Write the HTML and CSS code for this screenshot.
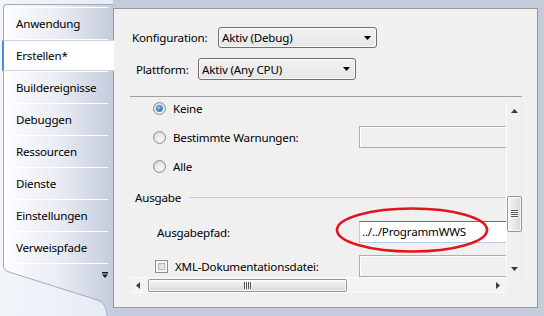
FILE: index.html
```html
<!DOCTYPE html>
<html lang="de">
<head>
<meta charset="utf-8">
<title>Projekteigenschaften</title>
<link rel="stylesheet" href="styles.css">
</head>
<body>
<div class="window">
  <nav class="side">
    <div class="tabs">
      <div class="tab"><span>Anwendung</span></div>
      <div class="tab active"><span>Erstellen*</span></div>
      <div class="tab"><span>Buildereignisse</span></div>
      <div class="tab"><span>Debuggen</span></div>
      <div class="tab"><span>Ressourcen</span></div>
      <div class="tab"><span>Dienste</span></div>
      <div class="tab"><span>Einstellungen</span></div>
      <div class="tab"><span>Verweispfade</span></div>
    </div>
    <svg class="tail" width="110" height="53" viewBox="0 0 110 53">
      <defs>
        <linearGradient id="tg" x1="0" y1="0" x2="1" y2="0">
          <stop offset="0" stop-color="#fdfdfe"/>
          <stop offset="0.5" stop-color="#e9ecf3"/>
          <stop offset="1" stop-color="#c4ccdc"/>
        </linearGradient>
      </defs>
      <path d="M0 0 L0 4 Q0 8 6 9.5 L96 38 Q103 40 105 53 L110 53 L110 0 Z" fill="url(#tg)"/>
      <path d="M0.5 0 L0.5 4 Q0.5 7.5 6 9 L96 37.5 Q102.5 39.5 104.5 53" fill="none" stroke="#a3abbb" stroke-width="1"/>
      <line x1="10" y1="0.5" x2="105" y2="0.5" stroke="#ffffff"/>
      <rect x="99" y="9" width="6" height="1.5" fill="#1a1a1a"/>
      <path d="M99 11.5 L105 11.5 L102 15 Z" fill="#1a1a1a"/>
    </svg>
  </nav>

  <main class="panel">
    <div class="cfg-row cfg-konf">
      <label class="cfg-label konf-label">Konfiguration:</label>
      <div class="select konf-select">
        <span>Aktiv (Debug)</span>
        <svg class="drop" width="7" height="4" viewBox="0 0 7 4"><path d="M0 0 L7 0 L3.5 4 Z" fill="#000"/></svg>
      </div>
    </div>
    <div class="cfg-row cfg-plat">
      <label class="cfg-label plat-label">Plattform:</label>
      <div class="select plat-select">
        <span>Aktiv (Any CPU)</span>
        <svg class="drop" width="7" height="4" viewBox="0 0 7 4"><path d="M0 0 L7 0 L3.5 4 Z" fill="#000"/></svg>
      </div>
    </div>
    <div class="sep"></div>

    <div class="scroll">
      <div class="content">
        <div class="row radio-row first">
          <span class="radio on"></span><span class="lbl">Keine</span>
        </div>
        <div class="row radio-row">
          <div class="lead"><span class="radio"></span><span class="lbl">Bestimmte Warnungen:</span></div>
          <div class="input disabled"></div>
        </div>
        <div class="row radio-row">
          <span class="radio"></span><span class="lbl">Alle</span>
        </div>
        <div class="row group">
          <span class="group-title">Ausgabe</span><span class="group-line"></span>
        </div>
        <div class="row">
          <div class="lead plain"><span>Ausgabepfad:</span></div>
          <div class="input active-input">../../ProgrammWWS</div>
        </div>
        <div class="row">
          <div class="lead check-lead"><span class="check"></span><span class="lbl">XML-Dokumentationsdatei:</span></div>
          <div class="input disabled"></div>
        </div>
      </div>

      <div class="vbar">
        <div class="sbtn"><svg width="7" height="4" viewBox="0 0 7 4"><path d="M3.5 0 L7 4 L0 4 Z" fill="#3c3c3c"/></svg></div>
        <div class="vthumb"><span class="vgrip"></span></div>
        <div class="sbtn down"><svg width="7" height="4" viewBox="0 0 7 4"><path d="M0 0 L7 0 L3.5 4 Z" fill="#3c3c3c"/></svg></div>
      </div>

      <div class="hbar">
        <div class="sbtn"><svg width="4" height="7" viewBox="0 0 4 7"><path d="M0 3.5 L4 0 L4 7 Z" fill="#3c3c3c"/></svg></div>
        <div class="hthumb"><span class="hgrip"></span></div>
        <div class="sbtn right"><svg width="4" height="7" viewBox="0 0 4 7"><path d="M4 3.5 L0 0 L0 7 Z" fill="#3c3c3c"/></svg></div>
      </div>
      <div class="corner"></div>
    </div>
  </main>

  <svg class="mark" width="544" height="316" viewBox="0 0 544 316">
    <ellipse cx="412" cy="230" rx="75" ry="21.5" fill="none" stroke="#e3141c" stroke-width="2.6"/>
  </svg>
</div>
</body>
</html>
```

FILE: styles.css
```css
* { box-sizing: border-box; }

html, body {
  margin: 0;
  padding: 0;
}

body {
  width: 544px;
  height: 316px;
  overflow: hidden;
  font-family: "Noto Sans", "Open Sans", sans-serif;
  font-size: 11.6px;
  letter-spacing: -0.2px;
  color: #000;
}

.window {
  position: relative;
  display: flex;
  width: 544px;
  height: 316px;
  background: #c4ccdc;
}

/* ---------- left tab strip ---------- */
.side {
  width: 113px;
  flex-shrink: 0;
  padding-top: 4px;
  padding-left: 3px;
  background: linear-gradient(to right, #f2f5fa, #e6ebf4);
  display: flex;
  flex-direction: column;
}

.tabs {
  border-left: 1px solid #a3abbb;
  border-top: 1px solid #a3abbb;
  border-top-left-radius: 4px;
  background: linear-gradient(to right, #fdfdfe 0%, #e9ecf3 50%, #c4ccdc 100%);
  padding-top: 2px;
}

.tab {
  position: relative;
  height: 32px;
  padding-left: 12px;
  padding-top: 1px;
  line-height: 31px;
  white-space: nowrap;
}

.tab::before {
  content: "";
  position: absolute;
  top: 0;
  left: 9px;
  right: 5px;
  height: 1px;
  background: #fff;
}

.tab span {
  position: relative;
  z-index: 1;
}

.tab.active::after {
  content: "";
  position: absolute;
  left: -2px;
  right: -1px;
  top: 1px;
  bottom: 0;
  background: #fff;
  border-left: 2px solid #3d8fe6;
  border-top: 1px solid #cdd2dc;
  border-bottom: 1px solid #cdd2dc;
  z-index: 0;
}

.tail {
  display: block;
}

/* ---------- right panel ---------- */
.panel {
  width: 425px;
  height: 300px;
  margin-top: 8px;
  border: 1px solid #9a9a9a;
  background: #f0f0f0;
  padding: 18px 15px 0 16px;
  display: flex;
  flex-direction: column;
}

.cfg-row {
  display: flex;
  align-items: center;
}

.cfg-konf { padding-left: 2px; }
.cfg-plat { padding-left: 6px; margin-top: 10px; }

.konf-label { width: 86px; }
.plat-label { width: 62px; }

.select {
  display: flex;
  align-items: center;
  justify-content: space-between;
  height: 21px;
  border: 1px solid #707070;
  border-radius: 3px;
  background: linear-gradient(#f1f1f1, #e6e6e6);
  box-shadow: inset 0 0 0 1px rgba(255, 255, 255, 0.7);
  padding: 0 5px 0 3px;
}

.konf-select { width: 159px; }
.plat-select { width: 158px; height: 22px; }

.drop { display: block; }

.sep {
  margin-top: 16px;
  height: 1px;
  background: #a0a0a0;
}

.scroll {
  margin-top: 3px;
  display: grid;
  grid-template-columns: 376px 16px;
  grid-template-rows: 177px 16px;
}

.content {
  overflow: hidden;
  display: flex;
  flex-direction: column;
}

.row {
  display: flex;
  align-items: center;
  height: 22px;
  flex-shrink: 0;
  white-space: nowrap;
}

.radio-row { padding-left: 23px; }
.row.first { margin-top: -3px; }
.row + .row { margin-top: 7px; }
.row.group { margin-top: 9px; padding-left: 5px; }
.row.group + .row { margin-top: 13px; }
.row.group + .row + .row { margin-top: 12px; }

.lead {
  display: flex;
  align-items: center;
  width: 206px;
  flex-shrink: 0;
}

.lead.plain { width: 229px; padding-left: 27px; }
.lead.check-lead { width: 229px; padding-left: 25px; }

.radio {
  width: 13px;
  height: 13px;
  flex-shrink: 0;
  border-radius: 50%;
  border: 1px solid #8e8f8f;
  background: radial-gradient(circle at 60% 65%, #fbfbfb 0, #e2e2e2 55%, #cbcbcb 100%);
  display: flex;
  align-items: center;
  justify-content: center;
}

.radio.on::after {
  content: "";
  width: 5px;
  height: 5px;
  border-radius: 50%;
  background: radial-gradient(circle at 40% 35%, #9ad8ff 0, #2a7cc4 60%, #0d3f70 100%);
  box-shadow: 0 0 0 1px #5b88b2;
}

.lbl { margin-left: 7px; }

.check {
  width: 13px;
  height: 13px;
  flex-shrink: 0;
  border: 1px solid #8e8f8f;
  background: #f4f4f4;
  padding: 2px;
  display: flex;
}

.check::after {
  content: "";
  flex: 1;
  border: 1px solid #b4b8bd;
  background: linear-gradient(135deg, #cfd3d8, #f7f7f7);
}

.input {
  width: 170px;
  height: 22px;
  flex-shrink: 0;
  padding-left: 2px;
  line-height: 20px;
}

.input.disabled {
  border: 1px solid #adadad;
  background: #f0f0f0;
  box-shadow: inset 1px 1px 0 #fff;
}

.input.active-input {
  border: 1px solid #b5cfe7;
  border-top-color: #3d7bad;
  background: #fff;
}

.group-title { margin-right: 8px; }

.group-line {
  flex: 1;
  height: 1px;
  background: #c8c8c8;
  margin-right: 1px;
}

/* scrollbars */
.vbar {
  margin-top: 3px;
  border-left: 1px solid #fff;
  border-right: 1px solid #e6e6e6;
  background: #f0f0f0;
  display: flex;
  flex-direction: column;
}

.sbtn {
  width: 15px;
  height: 16px;
  flex-shrink: 0;
  display: flex;
  align-items: center;
  justify-content: center;
}

.vbar .down { margin-top: auto; }

.vthumb {
  margin-top: 77px;
  height: 36px;
  width: 15px;
  border: 1px solid #979797;
  border-radius: 2px;
  background: linear-gradient(to right, #f6f6f6, #e8e8e8 50%, #d8d8d8);
  box-shadow: inset 0 0 0 1px rgba(255, 255, 255, 0.7);
  display: flex;
  align-items: center;
  justify-content: center;
}

.vgrip {
  width: 7px;
  height: 8px;
  background: repeating-linear-gradient(#555 0 1px, #f4f4f4 1px 2px);
}

.hbar {
  display: flex;
  align-items: center;
  background: #f3f3f3;
  border-top: 1px solid #fbfbfb;
  border-bottom: 1px solid #fbfbfb;
}

.hbar .sbtn { width: 16px; height: 14px; }
.hbar .right { margin-left: auto; }

.hthumb {
  margin-left: 2px;
  width: 199px;
  height: 13px;
  border: 1px solid #979797;
  border-radius: 2px;
  background: linear-gradient(#f6f6f6, #e8e8e8 50%, #d8d8d8);
  box-shadow: inset 0 0 0 1px rgba(255, 255, 255, 0.7);
  display: flex;
  align-items: center;
  justify-content: center;
}

.hgrip {
  width: 8px;
  height: 7px;
  background: repeating-linear-gradient(to right, #555 0 1px, #f4f4f4 1px 2px);
}

.corner { background: #f0f0f0; }

.mark {
  position: absolute;
  left: 0;
  top: 0;
  pointer-events: none;
}
```
